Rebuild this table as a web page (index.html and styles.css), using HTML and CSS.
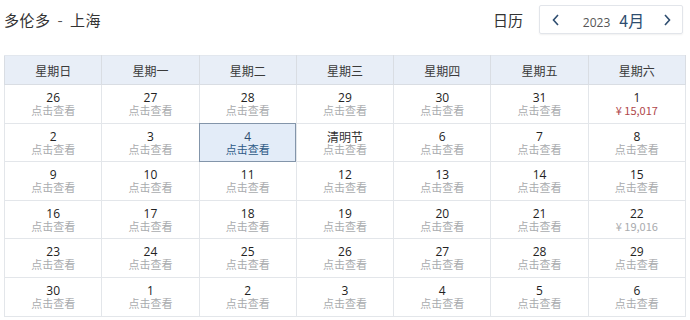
FILE: index.html
```html
<!DOCTYPE html>
<html lang="zh">
<head>
<meta charset="utf-8">
<link rel="stylesheet" href="styles.css">
</head>
<body>
<div class="page">
  <div class="top">
    <div class="title">多伦多 <span class="dash">-</span> 上海</div>
    <div class="right">
      <span class="cal-label">日历</span>
      <div class="nav">
        <svg class="arrow" width="10" height="14" viewBox="0 0 10 14"><path d="M7 2 L2.5 7 L7 12" fill="none" stroke="#2e4d70" stroke-width="1.6"/></svg>
        <span class="ym"><span class="year">2023</span><span class="month">4月</span></span>
        <svg class="arrow" width="10" height="14" viewBox="0 0 10 14"><path d="M3 2 L7.5 7 L3 12" fill="none" stroke="#2e4d70" stroke-width="1.6"/></svg>
      </div>
    </div>
  </div>
  <table class="cal">
    <thead>
      <tr><th>星期日</th><th>星期一</th><th>星期二</th><th>星期三</th><th>星期四</th><th>星期五</th><th>星期六</th></tr>
    </thead>
    <tbody>
      <tr>
        <td><div class="d">26</div><div class="s">点击查看</div></td>
        <td><div class="d">27</div><div class="s">点击查看</div></td>
        <td><div class="d">28</div><div class="s">点击查看</div></td>
        <td><div class="d">29</div><div class="s">点击查看</div></td>
        <td><div class="d">30</div><div class="s">点击查看</div></td>
        <td><div class="d">31</div><div class="s">点击查看</div></td>
        <td><div class="d">1</div><div class="s price">¥ 15,017</div></td>
      </tr>
      <tr>
        <td><div class="d">2</div><div class="s">点击查看</div></td>
        <td><div class="d">3</div><div class="s">点击查看</div></td>
        <td class="sel"><div class="d">4</div><div class="s">点击查看</div></td>
        <td><div class="d hol">清明节</div><div class="s">点击查看</div></td>
        <td><div class="d">6</div><div class="s">点击查看</div></td>
        <td><div class="d">7</div><div class="s">点击查看</div></td>
        <td><div class="d">8</div><div class="s">点击查看</div></td>
      </tr>
      <tr>
        <td><div class="d">9</div><div class="s">点击查看</div></td>
        <td><div class="d">10</div><div class="s">点击查看</div></td>
        <td><div class="d">11</div><div class="s">点击查看</div></td>
        <td><div class="d">12</div><div class="s">点击查看</div></td>
        <td><div class="d">13</div><div class="s">点击查看</div></td>
        <td><div class="d">14</div><div class="s">点击查看</div></td>
        <td><div class="d">15</div><div class="s">点击查看</div></td>
      </tr>
      <tr>
        <td><div class="d">16</div><div class="s">点击查看</div></td>
        <td><div class="d">17</div><div class="s">点击查看</div></td>
        <td><div class="d">18</div><div class="s">点击查看</div></td>
        <td><div class="d">19</div><div class="s">点击查看</div></td>
        <td><div class="d">20</div><div class="s">点击查看</div></td>
        <td><div class="d">21</div><div class="s">点击查看</div></td>
        <td><div class="d">22</div><div class="s">¥ 19,016</div></td>
      </tr>
      <tr>
        <td><div class="d">23</div><div class="s">点击查看</div></td>
        <td><div class="d">24</div><div class="s">点击查看</div></td>
        <td><div class="d">25</div><div class="s">点击查看</div></td>
        <td><div class="d">26</div><div class="s">点击查看</div></td>
        <td><div class="d">27</div><div class="s">点击查看</div></td>
        <td><div class="d">28</div><div class="s">点击查看</div></td>
        <td><div class="d">29</div><div class="s">点击查看</div></td>
      </tr>
      <tr>
        <td><div class="d">30</div><div class="s">点击查看</div></td>
        <td><div class="d">1</div><div class="s">点击查看</div></td>
        <td><div class="d">2</div><div class="s">点击查看</div></td>
        <td><div class="d">3</div><div class="s">点击查看</div></td>
        <td><div class="d">4</div><div class="s">点击查看</div></td>
        <td><div class="d">5</div><div class="s">点击查看</div></td>
        <td><div class="d">6</div><div class="s">点击查看</div></td>
      </tr>
    </tbody>
  </table>
</div>
</body>
</html>
```
FILE: styles.css
```css
* { box-sizing: border-box; }
html, body { margin: 0; padding: 0; background: #fff; }
body {
  font-family: "Noto Sans CJK SC", "Noto Sans", sans-serif;
  color: #333;
}
.page { width: 690px; height: 320px; padding: 5px 4px 0 4px; }
.top {
  display: flex;
  justify-content: space-between;
  align-items: center;
  height: 29px;
  margin-bottom: 21px;
}
.title { font-size: 15px; color: #333; letter-spacing: 0.5px; }
.dash { color: #555; margin: 0 3px; }
.right { display: flex; align-items: center; }
.cal-label { font-size: 15px; color: #333; margin-right: 16px; }
.nav {
  width: 144px;
  height: 29px;
  border: 1px solid #e2e5ea;
  border-radius: 2px;
  box-shadow: 0 1px 2px rgba(0,0,0,0.06);
  display: flex;
  align-items: center;
  justify-content: space-between;
  padding: 0 10px 0 11px;
  margin-right: 3px;
}
.ym { display: flex; align-items: baseline; margin-left: 4px; }
.year { font-size: 12px; color: #555; font-family: "Open Sans", "Noto Sans", sans-serif; }
.month { font-size: 16px; color: #2e4d70; margin-left: 9px; }
.cal {
  width: 682px;
  border-collapse: collapse;
  table-layout: fixed;
  border: 1px solid #d9dde3;
}
.cal th {
  height: 29px;
  background: #e8eef7;
  font-weight: normal;
  font-size: 12px;
  color: #3a3a3a;
  border: 1px solid #d9dde3;
  border-top-color: #e2e7ee;
  padding: 0;
}
.cal td {
  height: 38.6px;
  border: 1px solid #e3e6ea;
  text-align: center;
  vertical-align: top;
  padding: 6px 0 0 0;
}
.d {
  font-size: 12px;
  line-height: 13px;
  color: #222;
  font-family: "Open Sans", "Noto Sans CJK SC", sans-serif;
}
.d.hol { font-family: "Noto Sans CJK SC", sans-serif; color: #333; }
.s {
  font-size: 11px;
  line-height: 13px;
  color: #a9abae;
  font-family: "Noto Sans CJK SC", "Open Sans", sans-serif;
}
.s.price { color: #b0474a; }
.cal td.sel {
  background: #e3ecf8;
  outline: 1px solid #8395aa;
  outline-offset: -1px;
}
.cal td.sel .d { color: #2e4d70; }
.cal td.sel .s { color: #2e5a87; }
```
